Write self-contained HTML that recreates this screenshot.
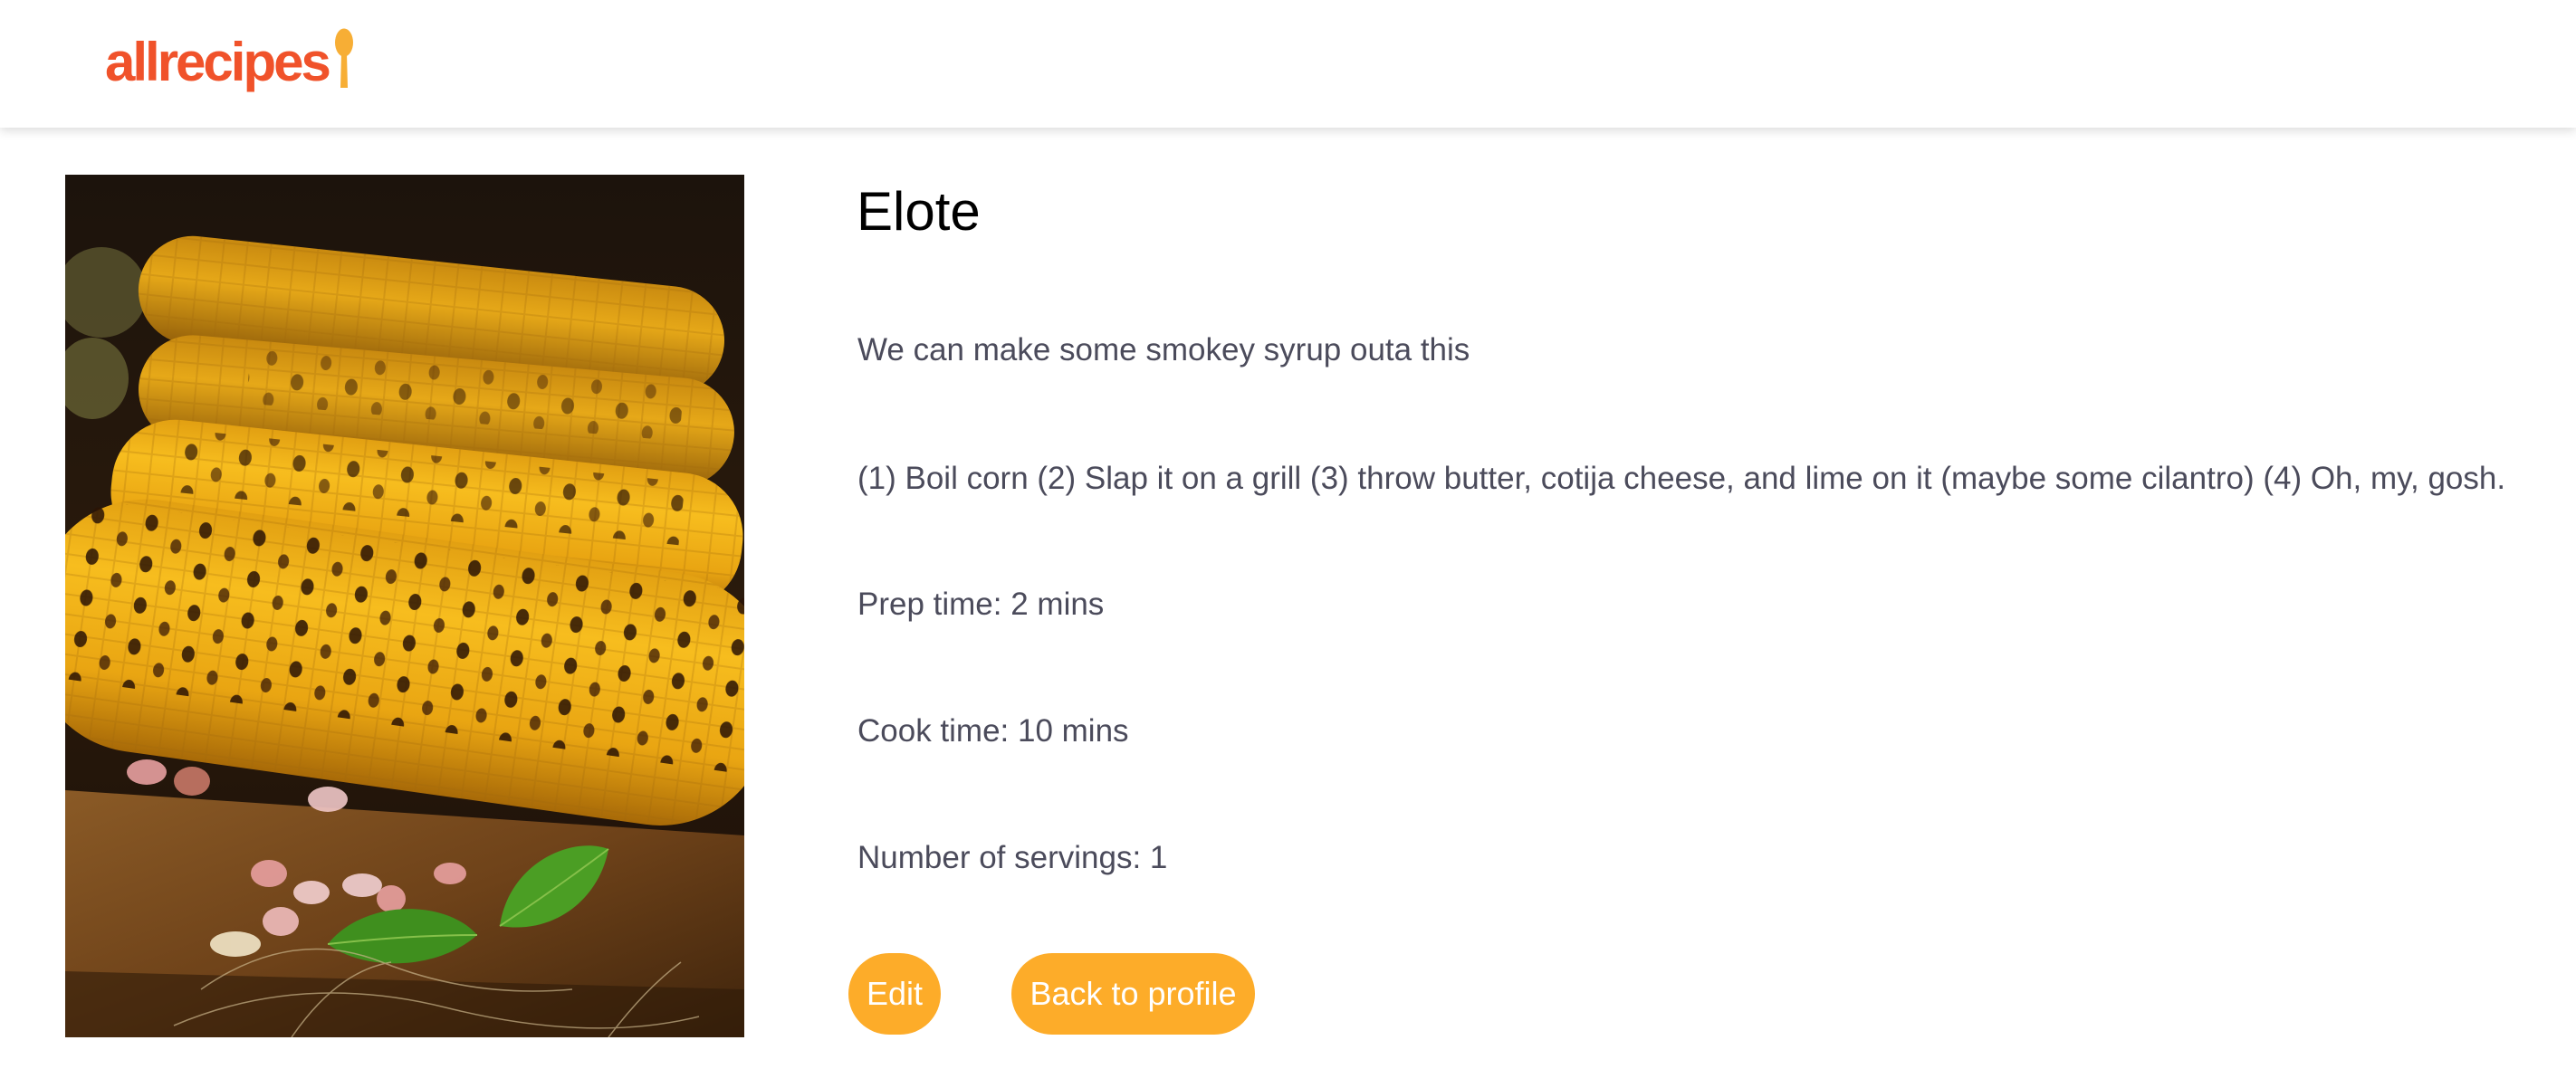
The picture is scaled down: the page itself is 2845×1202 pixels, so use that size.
<!DOCTYPE html>
<html>
<head>
<meta charset="utf-8">
<style>
  html,body{margin:0;padding:0;background:#fff;}
  body{width:2845px;height:1202px;position:relative;overflow:hidden;font-family:"Liberation Sans",sans-serif;}
  .hdr{position:absolute;left:0;top:0;width:2845px;height:141px;background:#fff;box-shadow:0 4px 10px rgba(0,0,0,0.13);z-index:2;}
  .logo{position:absolute;left:116px;top:24px;font-weight:bold;font-size:60px;letter-spacing:-3px;color:#f0522a;line-height:90px;}
  .spoon{position:absolute;left:369px;top:31px;}
  .img{position:absolute;left:72px;top:193px;width:750px;height:953px;overflow:hidden;}
  .t{position:absolute;left:947px;white-space:nowrap;color:#4b4b5b;font-size:35px;line-height:40px;}
  h1{position:absolute;left:946px;top:198px;margin:0;font-weight:normal;font-size:60px;line-height:72px;color:#000;}
  .btn{position:absolute;top:1053px;height:90px;border-radius:45px;background:#fdac29;color:#fff;font-size:36px;line-height:90px;text-align:center;}
</style>
</head>
<body>
<div class="hdr">
  <div class="logo">allrecipes</div>
  <svg class="spoon" width="24" height="68" viewBox="0 0 24 68">
    <ellipse cx="11" cy="16" rx="10" ry="15.5" fill="#f7ae35"/>
    <path d="M8 28 L14 28 L15 66 L7 66 Z" fill="#f7ae35"/>
  </svg>
</div>

<div class="img">
<svg width="750" height="953" viewBox="0 0 750 953">
  <defs>
    <linearGradient id="bg" x1="0" y1="0" x2="0" y2="1">
      <stop offset="0" stop-color="#1c130c"/>
      <stop offset="0.5" stop-color="#2a1a0c"/>
      <stop offset="1" stop-color="#1a0f07"/>
    </linearGradient>
    <linearGradient id="wood" x1="0" y1="0" x2="1" y2="1">
      <stop offset="0" stop-color="#8a5a26"/>
      <stop offset="0.5" stop-color="#6e4219"/>
      <stop offset="1" stop-color="#3f240c"/>
    </linearGradient>
    <linearGradient id="corn" x1="0" y1="0" x2="0" y2="1">
      <stop offset="0" stop-color="#e2a012"/>
      <stop offset="0.3" stop-color="#f7bd1e"/>
      <stop offset="0.7" stop-color="#e9a512"/>
      <stop offset="1" stop-color="#a86a08"/>
    </linearGradient>
    <linearGradient id="cornB" x1="0" y1="0" x2="0" y2="1">
      <stop offset="0" stop-color="#c98a10"/>
      <stop offset="0.4" stop-color="#e6a818"/>
      <stop offset="1" stop-color="#94600a"/>
    </linearGradient>
    <pattern id="kern" width="26" height="22" patternUnits="userSpaceOnUse">
      <path d="M0 11 H26 M13 0 V22" stroke="#a0650a" stroke-width="2" opacity="0.25"/>
    </pattern>
    <pattern id="char" width="60" height="46" patternUnits="userSpaceOnUse">
      <ellipse cx="14" cy="12" rx="7" ry="9" fill="#2a1305" opacity="0.85"/>
      <ellipse cx="44" cy="34" rx="6" ry="8" fill="#3a1a06" opacity="0.75"/>
    </pattern>
  </defs>
  <rect width="750" height="953" fill="url(#bg)"/>
  <path d="M0 680 L750 730 L750 953 L0 953 Z" fill="url(#wood)"/>
  <path d="M0 880 L750 900 L750 953 L0 953 Z" fill="#2e1a08" opacity="0.6"/>
  <ellipse cx="40" cy="130" rx="50" ry="50" fill="#6e6a3a" opacity="0.6"/>
  <ellipse cx="30" cy="225" rx="40" ry="45" fill="#7a7840" opacity="0.6"/>
  <g transform="rotate(6 400 150)">
    <rect x="80" y="95" width="650" height="120" rx="60" fill="url(#cornB)"/>
    <rect x="80" y="95" width="650" height="120" rx="60" fill="url(#kern)"/>
  </g>
  <g transform="rotate(5 400 260)">
    <rect x="80" y="200" width="660" height="120" rx="60" fill="url(#cornB)"/>
    <rect x="80" y="200" width="660" height="120" rx="60" fill="url(#kern)"/>
    <rect x="200" y="210" width="480" height="60" fill="url(#char)" opacity="0.6"/>
  </g>
  <g transform="rotate(6 400 370)">
    <rect x="50" y="300" width="700" height="150" rx="70" fill="url(#corn)"/>
    <rect x="50" y="300" width="700" height="150" rx="70" fill="url(#kern)"/>
    <rect x="120" y="310" width="560" height="70" fill="url(#char)" opacity="0.8"/>
  </g>
  <g transform="rotate(8 380 560)">
    <rect x="-40" y="400" width="820" height="280" rx="120" fill="url(#corn)"/>
    <rect x="-40" y="400" width="820" height="280" rx="120" fill="url(#kern)"/>
    <rect x="0" y="410" width="760" height="200" fill="url(#char)"/>
  </g>
  <g fill="#e8a0a0" opacity="0.9">
    <ellipse cx="90" cy="660" rx="22" ry="14"/>
    <ellipse cx="140" cy="670" rx="20" ry="16" fill="#c87868"/>
    <ellipse cx="290" cy="690" rx="22" ry="14" fill="#f0c6c6"/>
    <ellipse cx="225" cy="772" rx="20" ry="15"/>
    <ellipse cx="272" cy="793" rx="20" ry="13" fill="#f4d0d0"/>
    <ellipse cx="238" cy="825" rx="20" ry="16" fill="#f0bcbc"/>
    <ellipse cx="360" cy="800" rx="16" ry="15"/>
    <ellipse cx="328" cy="785" rx="22" ry="13" fill="#f2d0d2"/>
    <ellipse cx="425" cy="772" rx="18" ry="12"/>
    <ellipse cx="188" cy="850" rx="28" ry="14" fill="#f2e6c8"/>
  </g>
  <path d="M290 850 C330 800 420 800 455 840 C410 880 330 880 290 850 Z" fill="#3f8f1e"/>
  <path d="M480 830 C490 760 560 730 600 745 C590 800 540 840 480 830 Z" fill="#4b9e24"/>
  <path d="M290 850 Q380 840 455 840 M480 830 Q540 790 600 745" stroke="#86c04a" stroke-width="2" fill="none"/>
  <g stroke="#c9b48a" stroke-width="1.5" fill="none" opacity="0.7">
    <path d="M150 900 Q250 830 350 870 T560 900"/>
    <path d="M120 940 Q260 880 420 920 T700 930"/>
    <path d="M250 953 Q300 880 360 870"/>
    <path d="M600 953 Q640 900 680 870"/>
  </g>
</svg>
</div>

<h1>Elote</h1>
<div class="t" style="top:367px;">We can make some smokey syrup outa this</div>
<div class="t" style="top:509px;">(1) Boil corn (2) Slap it on a grill (3) throw butter, cotija cheese, and lime on it (maybe some cilantro) (4) Oh, my, gosh.</div>
<div class="t" style="top:648px;">Prep time: 2 mins</div>
<div class="t" style="top:788px;">Cook time: 10 mins</div>
<div class="t" style="top:928px;">Number of servings: 1</div>

<div class="btn" style="left:937px;width:102px;">Edit</div>
<div class="btn" style="left:1117px;width:269px;">Back to profile</div>
</body>
</html>
